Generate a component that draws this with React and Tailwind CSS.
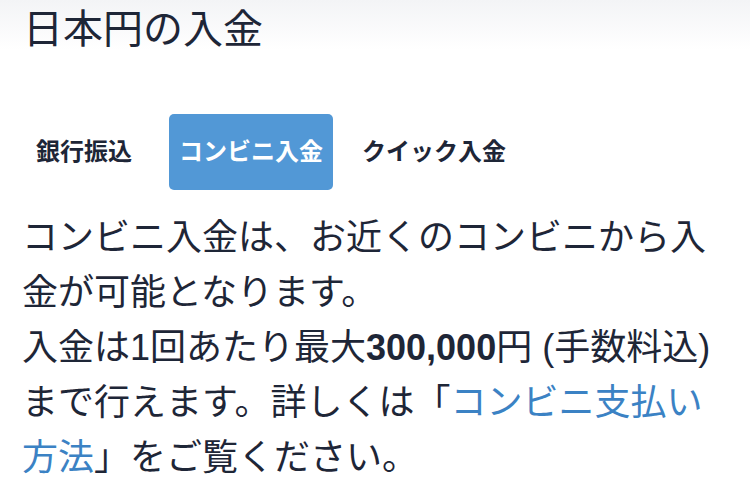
export default function App() {
  const font = { fontFamily: '"Liberation Sans", "Noto Sans CJK JP", sans-serif' };
  return (
    <div
      className="w-[750px] h-[501px] overflow-hidden bg-[linear-gradient(to_bottom,#f3f4f6_0px,#ffffff_50px)] text-[#1e2637] px-[22px]"
      style={font}
    >
      <h1 className="text-[40px] leading-[58px] font-normal pl-[1px]">日本円の入金</h1>
      <div className="mt-[56px] flex items-center h-[76px] text-[24px] font-bold">
        <div className="pl-[14px] pr-[37px]">銀行振込</div>
        <div className="h-[76px] px-[10px] flex items-center rounded-[5px] bg-[#5298d6] text-white">
          コンビニ入金
        </div>
        <div className="pl-[29px]">クイック入金</div>
      </div>
      <div className="mt-[20px] text-[36px] leading-[55px]">
        <p>コンビニ入金は、お近くのコンビニから入金が可能となります。</p>
        <p>
          入金は1回あたり最大<span className="font-bold">300,000</span>円 (手数料込)まで行えます。詳しくは「
          <span className="text-[#3b82c4]">コンビニ支払い方法</span>」をご覧ください。
        </p>
      </div>
    </div>
  );
}
